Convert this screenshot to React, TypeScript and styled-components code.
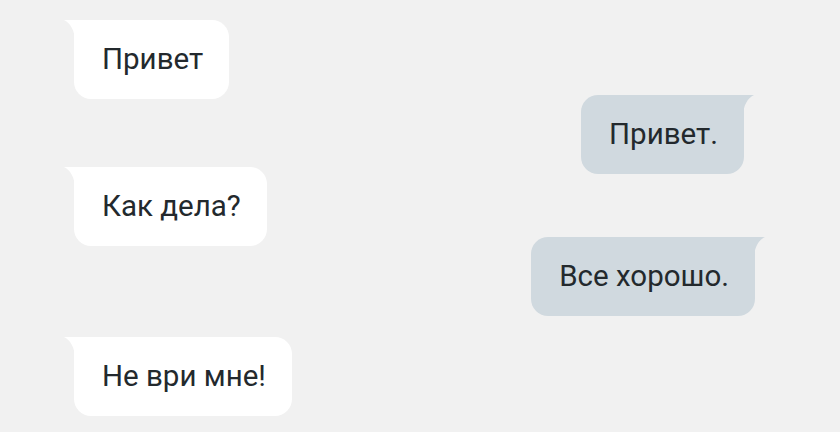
import React from "react";
import styled, { createGlobalStyle } from "styled-components";

const messages = [
	{ text: "Привет", mine: false, top: 20, shift: 0 },
	{ text: "Привет.", mine: true, top: -4, shift: 86 },
	{ text: "Как дела?", mine: false, top: -7, shift: 0 },
	{ text: "Все хорошо.", mine: true, top: -9, shift: 75 },
	{ text: "Не ври мне!", mine: false, top: 21, shift: 0 },
];

export default function App() {
	return (
		<>
			<GlobalStyle />
			<Chat>
				{messages.map((m, i) => (
					<Row key={i} $mine={m.mine} $top={m.top} $shift={m.shift}>
						<Bubble $mine={m.mine}>{m.text}</Bubble>
					</Row>
				))}
			</Chat>
		</>
	);
}

const GlobalStyle = createGlobalStyle`
	html, body {
		margin: 0;
		background: #f1f1f1;
	}
`;

const Chat = styled.div`
	display: flex;
	flex-direction: column;
	width: 840px;
	height: 432px;
	overflow: hidden;
	font-family: Roboto, "Noto Sans", sans-serif;
`;

const Row = styled.div<{ $mine: boolean; $top: number; $shift: number }>`
	display: flex;
	justify-content: ${({ $mine }) => ($mine ? "flex-end" : "flex-start")};
	margin-top: ${({ $top }) => $top}px;
	padding: ${({ $mine, $shift }) => ($mine ? `0 ${$shift + 10}px 0 0` : "0 0 0 74px")};
`;

const Bubble = styled.div<{ $mine: boolean }>`
	position: relative;
	display: flex;
	align-items: center;
	height: 79px;
	padding: 0 26px 1px 28px;
	box-sizing: border-box;
	border-radius: ${({ $mine }) => ($mine ? "17px 0 17px 17px" : "0 17px 17px 17px")};
	background: ${({ $mine }) => ($mine ? "#d0d9df" : "#ffffff")};
	color: #23292d;
	font-size: 29.5px;
	white-space: nowrap;

	&::before {
		content: "";
		position: absolute;
		top: 0;
		width: 11px;
		height: 22px;
		background: inherit;
		${({ $mine }) =>
			$mine
				? `right: -10px; clip-path: path('M11 0 H0 V22 C0 10 5 3 11 0 Z');`
				: `left: -10px; clip-path: path('M0 0 H11 V22 C11 10 6 3 0 0 Z');`}
	}
`;
